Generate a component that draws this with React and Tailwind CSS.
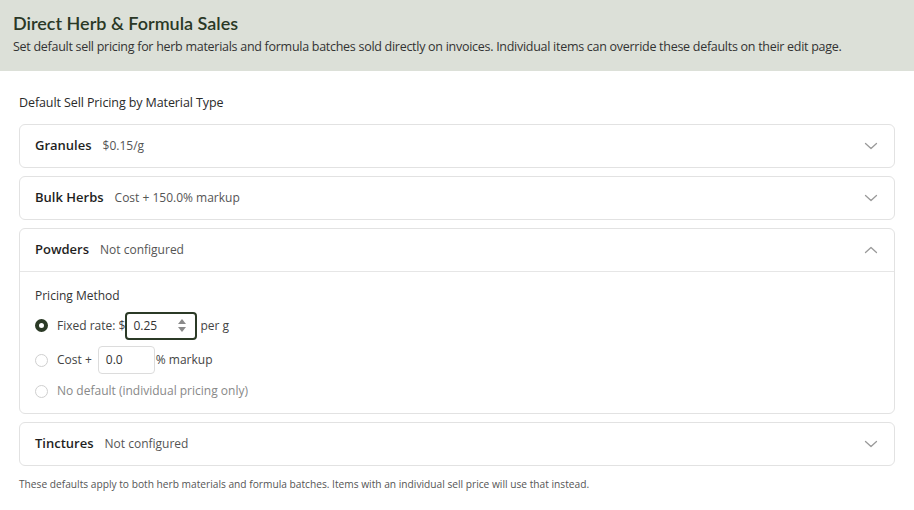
const font = { fontFamily: '"Open Sans", "Noto Sans", sans-serif' };
const titleFont = { fontFamily: 'Lato, "Open Sans", sans-serif' };

function Chevron({ up }) {
  return (
    <svg width="14" height="14" viewBox="0 0 14 14" fill="none" className="text-[#9a9a9a]">
      <path
        d={up ? "M1.5 9.5L7 4.5L12.5 9.5" : "M1.5 4.5L7 9.5L12.5 4.5"}
        stroke="currentColor"
        strokeWidth="1.3"
        strokeLinecap="round"
        strokeLinejoin="round"
      />
    </svg>
  );
}

function CardHeader({ name, summary, open }) {
  return (
    <div className="flex h-[42px] items-center justify-between pl-[15px] pr-[16px]">
      <div className="flex items-baseline gap-[11px]">
        <span className="text-[13px] font-semibold text-[#1f1f1f]">{name}</span>
        <span className="text-[12px] text-[#555]">{summary}</span>
      </div>
      <Chevron up={open} />
    </div>
  );
}

function Radio({ checked }) {
  if (checked) {
    return <span className="box-border h-[13px] w-[13px] shrink-0 rounded-full border-[4px] border-[#2b3a26] bg-white" />;
  }
  return <span className="box-border h-[13px] w-[13px] shrink-0 rounded-full border border-[#cfcfcf] bg-white" />;
}

export default function App() {
  const closed = [
    { name: "Granules", summary: "$0.15/g" },
    { name: "Bulk Herbs", summary: "Cost + 150.0% markup" },
  ];
  return (
    <div className="min-h-[510px] w-[914px] bg-white" style={font}>
      <div className="h-[71px] bg-[#dce0d8] px-[13px] pt-[11px]">
        <h1 className="text-[18px] font-semibold leading-[24px] text-[#2a3826]" style={titleFont}>
          Direct Herb &amp; Formula Sales
        </h1>
        <p className="mt-[3px] text-[12.5px] leading-[18px] tracking-[-0.28px] text-[#333]">
          Set default sell pricing for herb materials and formula batches sold directly on invoices. Individual items can override these defaults on their edit page.
        </p>
      </div>

      <div className="px-[19px] pt-[23px]">
        <div className="text-[12.5px] font-medium leading-[18px] tracking-[-0.1px] text-[#2a2a2a]">
          Default Sell Pricing by Material Type
        </div>

        <div className="mt-[12px] flex flex-col gap-[8px]">
          {closed.map((c) => (
            <div key={c.name} className="rounded-[6px] border border-[#e2e2e2] bg-white">
              <CardHeader name={c.name} summary={c.summary} />
            </div>
          ))}

          <div className="rounded-[6px] border border-[#e2e2e2] bg-white">
            <CardHeader name="Powders" summary="Not configured" open />
            <div className="border-t border-[#e6e6e6] px-[15px] pb-[10px] pt-[16px]">
              <div className="text-[12px] font-medium leading-[16px] text-[#333]">Pricing Method</div>
              <div className="mt-[7px] flex flex-col">
                <div className="flex h-[29px] items-center text-[12px] text-[#444]">
                  <Radio checked />
                  <span className="ml-[9px]">Fixed rate: $</span>
                  <div className="flex h-[28px] w-[72px] items-center justify-between rounded-[4px] border-2 border-[#2b3a26] pl-[6px] pr-[9px] text-[#333]">
                    <span>0.25</span>
                    <span className="flex flex-col items-center gap-[3px] text-[#8a8a8a]">
                      <svg width="8" height="5" viewBox="0 0 8 5"><path d="M4 0L8 5H0Z" fill="currentColor" /></svg>
                      <svg width="8" height="5" viewBox="0 0 8 5"><path d="M0 0H8L4 5Z" fill="currentColor" /></svg>
                    </span>
                  </div>
                  <span className="ml-[3px]">per g</span>
                </div>
                <div className="mt-[6px] flex h-[28px] items-center text-[12px] text-[#444]">
                  <Radio />
                  <span className="ml-[9px]">Cost +</span>
                  <div className="ml-[6px] flex h-[28px] w-[57px] items-center rounded-[4px] border border-[#dcdcdc] pl-[7px] text-[#333]">
                    0.0
                  </div>
                  <span className="ml-[1px]">% markup</span>
                </div>
                <div className="mt-[5px] flex h-[24px] items-center text-[12px] text-[#888]">
                  <Radio />
                  <span className="ml-[9px]">No default (individual pricing only)</span>
                </div>
              </div>
            </div>
          </div>

          <div className="rounded-[6px] border border-[#e2e2e2] bg-white">
            <CardHeader name="Tinctures" summary="Not configured" />
          </div>
        </div>

        <p className="mt-[11px] text-[10.2px] leading-[14px] text-[#555]">
          These defaults apply to both herb materials and formula batches. Items with an individual sell price will use that instead.
        </p>
      </div>
    </div>
  );
}
